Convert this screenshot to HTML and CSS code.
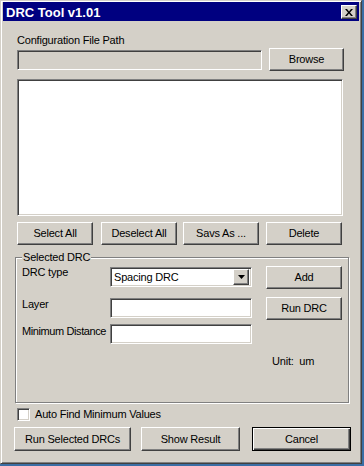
FILE: index.html
```html
<!DOCTYPE html>
<html lang="en">
  <head>
    <meta charset="UTF-8" />
    <meta name="viewport" content="width=device-width, initial-scale=1.0" />
    <title>DRC Tool v1.01</title>
    <link rel="stylesheet" href="styles.css">
  </head>
  <body>
    <div class="window">
      <div class="titlebar">
        <span class="title">DRC Tool v1.01</span>
        <button class="close">
          <svg width="8" height="7" viewBox="0 0 8 7">
            <path d="M0 0h2l2 2.5L6 0h2L5 3.5 8 7H6L4 4.5 2 7H0l3-3.5z" fill="#000" />
          </svg>
        </button>
      </div>
      <div class="content">
        <div class="cfg-label">Configuration File Path</div>
        <div class="path-row">
          <div class="field path-field"></div>
          <button class="btn browse">Browse</button>
        </div>
        <div class="field listbox"></div>
        <div class="list-actions">
          <button class="btn act">Select All</button>
          <button class="btn act deselect">Deselect All</button>
          <button class="btn act saveas">Savs As ...</button>
          <button class="btn act delete">Delete</button>
        </div>
        <div class="group">
          <span class="legend">Selected DRC</span>
          <div class="drc-grid">
            <span class="lbl lbl-type">DRC type</span>
            <div class="field combo">
              <span class="combo-text">Spacing DRC</span>
              <span class="combo-arrow">
                <svg width="7" height="4" viewBox="0 0 7 4"><path d="M0 0h7L3.5 4z" fill="#000" /></svg>
              </span>
            </div>
            <span></span>
            <button class="btn side add">Add</button>

            <span class="lbl lbl-layer">Layer</span>
            <div class="field input in-layer"></div>
            <span></span>
            <button class="btn side run">Run DRC</button>

            <span class="lbl lbl-dist">Minimum Distance</span>
            <div class="field input in-dist"></div>
            <span></span>
            <span></span>

            <span></span>
            <span></span>
            <span></span>
            <span class="unit">Unit:  um</span>
          </div>
        </div>
        <label class="check-row">
          <span class="checkbox"></span>
          Auto Find Minimum Values
        </label>
        <div class="footer">
          <button class="btn foot run-sel">Run Selected DRCs</button>
          <button class="btn foot show">Show Result</button>
          <button class="btn foot default">Cancel</button>
        </div>
      </div>
    </div>
  </body>
</html>
```

FILE: styles.css
```css
* {
  margin: 0;
  padding: 0;
  box-sizing: border-box;
}
body {
  width: 364px;
  height: 466px;
  background: #3a6ea5;
  font-family: "Liberation Sans", Arial, sans-serif;
  font-size: 11px;
  letter-spacing: -0.2px;
  line-height: 13px;
  color: #000;
}
.window {
  width: 362px;
  height: 464px;
  background: #d4d0c8;
  border: 1px solid;
  border-color: #d4d0c8 #404040 #404040 #d4d0c8;
  box-shadow: inset 1px 1px #fff, inset -1px -1px #808080;
  padding: 1px 2px 0 2px;
}
.titlebar {
  height: 19px;
  background: #000080;
  display: flex;
  align-items: center;
  justify-content: space-between;
  padding: 0 2px 0 3px;
}
.title {
  color: #fff;
  font-weight: bold;
  font-size: 13px;
  letter-spacing: 0;
  padding-top: 2px;
}
.close {
  width: 16px;
  height: 14px;
  background: #d4d0c8;
  border: 1px solid;
  border-color: #fff #404040 #404040 #fff;
  box-shadow: inset -1px -1px #808080;
  display: flex;
  align-items: center;
  justify-content: center;
  margin-top: 1px;
}
.close svg {
  display: block;
}

/* controls */
.btn {
  font: inherit;
  letter-spacing: inherit;
  color: #000;
  background: #d4d0c8;
  border: 1px solid;
  border-color: #fff #404040 #404040 #fff;
  box-shadow: inset -1px -1px #808080;
  text-align: center;
}
.btn.default {
  border-color: #000;
  box-shadow: inset 1px 1px #fff, inset -1px -1px #404040, inset -2px -2px #808080;
}
.field {
  background: #fff;
  border: 1px solid;
  border-color: #808080 #fff #fff #808080;
  box-shadow: inset 1px 1px #404040, inset -1px -1px #d4d0c8;
}

.content {
  display: flex;
  flex-direction: column;
}
.cfg-label {
  margin: 13px 0 0 14px;
}
.path-row {
  margin: 1px 0 0 14px;
  height: 23px;
  display: flex;
  align-items: center;
}
.path-field {
  width: 245px;
  height: 20px;
  background: #d4d0c8;
}
.browse {
  width: 75px;
  height: 23px;
  margin-left: 7px;
}
.listbox {
  width: 326px;
  height: 137px;
  margin: 8px 0 0 14px;
}
.list-actions {
  display: flex;
  margin: 6px 0 0 14px;
}
.act {
  width: 76px;
  height: 23px;
}
.deselect {
  margin-left: 8px;
}
.saveas {
  margin-left: 6px;
}
.delete {
  margin-left: 7px;
}

.group {
  position: relative;
  width: 334px;
  height: 146px;
  margin: 12px 0 0 12px;
  border: 1px solid #808080;
  box-shadow: inset 1px 1px #fff, 1px 1px #fff;
  padding: 8px 0 0 6px;
}
.legend {
  position: absolute;
  top: -7px;
  left: 6px;
  padding: 0 1px;
  background: #d4d0c8;
}
.drc-grid {
  display: grid;
  grid-template-columns: 88px 142px 14px 76px;
  grid-template-rows: 23px 32px 23px auto;
}
.lbl {
  align-self: start;
}
.lbl-layer {
  margin-top: 9px;
}
.lbl-dist {
  margin-top: 4px;
  white-space: nowrap;
  letter-spacing: -0.4px;
}
.combo {
  height: 20px;
  margin-top: 1px;
  display: flex;
  align-items: center;
  justify-content: space-between;
  padding: 0 2px 0 3px;
}
.combo-arrow {
  width: 16px;
  height: 16px;
  background: #d4d0c8;
  border: 1px solid;
  border-color: #fff #404040 #404040 #fff;
  box-shadow: inset -1px -1px #808080;
  display: flex;
  align-items: center;
  justify-content: center;
}
.combo-arrow svg {
  display: block;
}
.side {
  height: 23px;
}
.run {
  margin-top: 8px;
}
.input {
  height: 20px;
}
.in-layer {
  margin-top: 9px;
}
.in-dist {
  margin-top: 3px;
}
.unit {
  white-space: pre;
  margin: 11px 0 0 6px;
}

.check-row {
  display: flex;
  align-items: center;
  margin: 5px 0 0 14px;
  height: 13px;
}
.checkbox {
  width: 13px;
  height: 13px;
  background: #fff;
  border: 1px solid;
  border-color: #808080 #fff #fff #808080;
  box-shadow: inset 1px 1px #404040, inset -1px -1px #d4d0c8;
  margin-right: 5px;
}
.footer {
  display: flex;
  margin: 6px 0 0 11px;
}
.foot {
  height: 24px;
}
.run-sel {
  width: 117px;
}
.show {
  width: 99px;
  margin-left: 10px;
}
.default {
  width: 99px;
  margin-left: 12px;
}
```
